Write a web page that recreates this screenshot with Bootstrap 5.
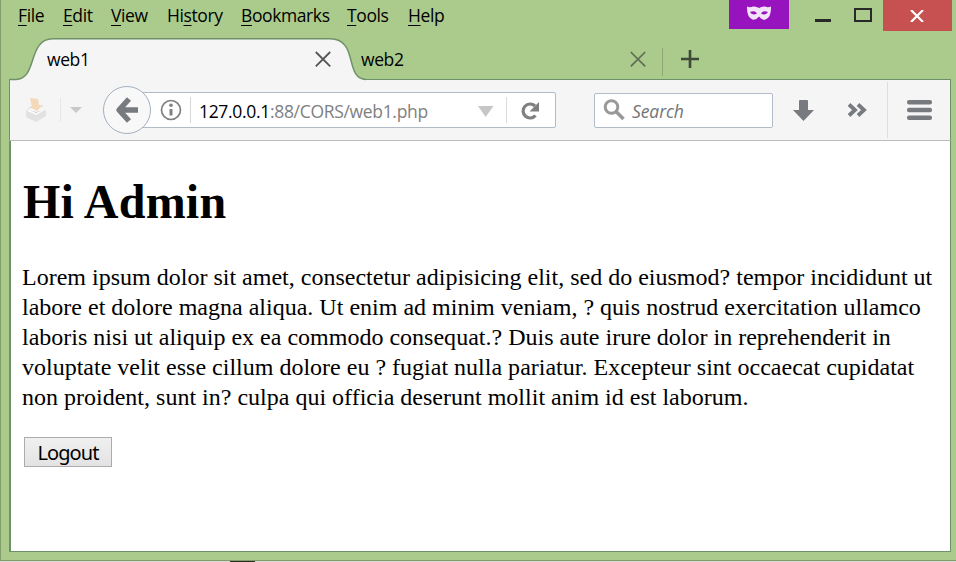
<!DOCTYPE html>
<html lang="en">
<head>
<meta charset="utf-8">
<meta name="viewport" content="width=device-width, initial-scale=1">
<title>web1</title>
<link href="https://cdn.jsdelivr.net/npm/bootstrap@5.3.0/dist/css/bootstrap.min.css" rel="stylesheet">
<style>
body{width:956px;height:562px;overflow:hidden;background:#d9d9d9;font-family:"Open Sans","Noto Sans",sans-serif;font-size:17.5px;line-height:24px;color:#000}
svg{display:block;flex:none}
.win{height:561px;background:#abcb8c;border-left:1px solid #819c69;border-bottom:1px solid #819c69;padding:0 5px 8px 8px}
.titlebar{height:38px}
.menus{display:grid;grid-template-columns:27px 30px 38px 56px 88px 43px 37px;column-gap:18px;padding:3px 0 0 9px;letter-spacing:-.4px}
.menus span{white-space:nowrap}
.menus u{text-underline-offset:3px;text-decoration-thickness:1px}
.mask{width:60px;height:29px;background:#9613be}
.closebtn{width:69px;height:31px;background:#c75050;margin-right:-1px;padding-right:2px}
.tabs{height:41px;letter-spacing:-.4px}
.tab1{width:363px;height:43px;padding:9px 0 0 38px}
.tab2{padding-top:9px;margin-left:-11px}
.tab2 span{width:269px}
.tab2 svg{margin-top:1px}
.tabclose{margin:1px 41px 0 auto}
.tabshape{left:0;top:0;z-index:0}
.chrome{height:62px;background:#f5f5f5;border:1px solid #6f9169;border-bottom:1px solid #bcbcbc}
.page{background:#fff;border:1px solid #6f9169;border-left-width:2px;border-top:0;padding:31px 11px 0 11px;font-family:"Liberation Serif","Times New Roman",serif;color:#000}
.back{width:48px;height:48px;border:1px solid #a3b0bf;background:#f8f8f8;z-index:2}
.url{width:424px;height:36px;margin-left:-19px;border:1px solid #b1bcc8;background:#fff;border-radius:2px}
.addr{color:#7f7f7f;white-space:nowrap;padding:2px 0 0 3px;letter-spacing:-.32px}
.addr b{font-weight:400;color:#000}
.search{width:179px;height:35px;border:1px solid #b1bcc8;background:#fff;border-radius:2px;margin-left:38px}
.hint{font-style:italic;color:#747474;padding-top:2px;letter-spacing:-.1px}
.page h1{font-size:48px;line-height:60px;font-weight:700;margin:0 0 30px 1px;letter-spacing:.25px}
.page p{font-size:24px;line-height:30px;margin:0 0 25px;white-space:nowrap;letter-spacing:.005px}
.logout{width:88px;height:30px;margin-left:2px;border:1px solid #acacac;background:linear-gradient(#f0f0f0,#e3e3e3);font:20px/28px "Noto Sans",sans-serif;letter-spacing:-.95px;color:#000;padding:1px 0 0}
.scrap{left:230px;top:561px;width:25px;height:1px;background:#2b3026}
</style>
<script src="https://cdn.jsdelivr.net/npm/bootstrap@5.3.0/dist/js/bootstrap.bundle.min.js"></script>
</head>
<body>
<div class="win d-flex flex-column">
  <div class="titlebar d-flex align-items-start flex-shrink-0">
    <nav class="menus">
      <span><u>F</u>ile</span><span><u>E</u>dit</span><span><u>V</u>iew</span><span>Hi<u>s</u>tory</span><span><u>B</u>ookmarks</span><span><u>T</u>ools</span><span><u>H</u>elp</span>
    </nav>
    <div class="mask ms-auto d-flex justify-content-center"><svg width="26" height="29" viewBox="0 0 26 29"><path fill="#f3e3f8" fill-rule="evenodd" d="M1 6.500Q4 8 7 6.500Q10 6 13 8Q16 6 19 6.500Q22 8 25 6.500Q25.500 18 19 19.700Q15.500 20 13 16.500Q10.500 20 7 19.700Q.5 18 1 6.500ZM4 12Q6 16 11 13.500Q9 10 4 12ZM22 12Q20 16 15 13.500Q17 10 22 12Z"/></svg></div>
    <svg width="94" height="31" viewBox="0 0 94 31"><path fill="#292929" d="M26 19h16v3H26z"/><path fill="none" stroke="#292929" stroke-width="2" d="M66 9h16v12H66z"/></svg>
    <div class="closebtn d-flex align-items-center justify-content-center"><svg width="14" height="12" viewBox="0 0 14 12"><path stroke="#fff" stroke-width="2.200" d="M1 0l12 12M13 0L1 12"/></svg></div>
  </div>
  <div class="tabs d-flex flex-shrink-0">
    <div class="tab1 position-relative d-flex align-items-start flex-shrink-0">
      <svg class="tabshape position-absolute" width="363" height="43" viewBox="0 0 363 43"><path fill="#f5f5f5" d="M1 43V41.500H7C29 41 18 .8 44 .8H321C350 .8 335 41 357 41.500V43Z"/><path fill="none" stroke="#6f9169" stroke-width="1.500" d="M0 41.500H7C29 41 18 .8 44 .8H321C350 .8 335 41 357 41.500"/></svg>
      <span class="position-relative">web1</span>
      <svg class="tabclose position-relative" width="16" height="23" viewBox="0 0 16 23"><path stroke="#555" stroke-width="1.800" d="M.8 4l14.400 14.400M15.200 4L.8 18.400"/></svg>
    </div>
    <div class="tab2 d-flex align-items-start">
      <span>web2</span>
      <svg width="84" height="28" viewBox="0 0 84 28"><path stroke="#606d54" stroke-width="1.700" d="M.8 4l14.400 14.400M15.200 4L.8 18.400"/><path stroke="#8da873" d="M32.500 0v28"/><path stroke="#3e4836" stroke-width="2.600" d="M51 11h18M60 2v18"/></svg>
    </div>
  </div>
  <div class="chrome d-flex align-items-center flex-shrink-0">
    <svg width="93" height="58" viewBox="0 0 93 58"><path fill="#e2e2e2" d="M16 30l5-5h10l5 5v5l-10 6-10-5z"/><path fill="#fafafa" d="M17 30l5-4h9l4 3-9 5z"/><path fill="#c9c9c9" d="M20 29l6 3 6-3-6 2z"/><path fill="#f4d8ba" d="M20 17l8 1 1 6h4l-6 6-8-4h3z"/><path stroke="#e7e7e7" d="M50.500 17v24"/><path fill="#c9c9c9" d="M60 26h12l-6 6z"/></svg>
    <div class="back rounded-circle d-flex align-items-center justify-content-center flex-shrink-0"><svg width="24" height="26" viewBox="0 0 24 26"><path fill="none" stroke="#777a7e" stroke-width="5.500" stroke-linejoin="round" d="M14 2L4 13l10 11M4 13h19"/></svg></div>
    <div class="url d-flex align-items-center flex-shrink-0">
      <svg width="63" height="34" viewBox="0 0 63 34"><circle cx="38" cy="17" r="9.500" fill="none" stroke="#808080" stroke-width="1.700"/><circle cx="38" cy="12.300" r="1.800" fill="#808080"/><path stroke="#808080" stroke-width="3" d="M38 16v6.500"/><path stroke="#d7d7d7" d="M57.500 4v26"/></svg>
      <span class="addr"><b>127.0.0.1</b>:88/CORS/web1.php</span>
      <svg class="ms-auto" width="77" height="34" viewBox="0 0 77 34"><path fill="#c6c6c6" d="M0 13h15.500L7.700 24z"/><path stroke="#dcdcdc" d="M28.500 4v26"/><path fill="none" stroke="#808080" stroke-width="3.200" d="M57.500 22.500A7 7 0 1 1 57 13"/><path fill="#808080" d="M61 9v9.500h-9.500z"/></svg>
    </div>
    <div class="search d-flex align-items-center flex-shrink-0">
      <svg width="37" height="33" viewBox="0 0 37 33"><circle cx="16.500" cy="13" r="6.300" fill="none" stroke="#999" stroke-width="3"/><path stroke="#999" stroke-width="3.500" d="M21 17.500l7.500 7.500"/></svg>
      <span class="hint">Search</span>
    </div>
    <svg width="168" height="58" viewBox="0 0 168 58"><g fill="#777a7e"><path d="M26 20q0-1 1-1h7q1 0 1 1v9h6L30.500 40 20 29h6z"/><rect x="134" y="19" width="25" height="4.500" rx="2"/><rect x="134" y="26.800" width="25" height="4.500" rx="2"/><rect x="134" y="34.500" width="25" height="4.500" rx="2"/></g><path fill="none" stroke="#777a7e" stroke-width="3.800" d="M76 23.500l6 5.500-6 5.500M85 23.500l6 5.500-6 5.500"/><path stroke="#dedede" d="M114.500 1v56"/></svg>
  </div>
  <main class="page flex-grow-1">
    <h1>Hi Admin</h1>
    <p>Lorem ipsum dolor sit amet, consectetur adipisicing elit, sed do eiusmod? tempor incididunt ut<br>labore et dolore magna aliqua. Ut enim ad minim veniam, ? quis nostrud exercitation ullamco<br>laboris nisi ut aliquip ex ea commodo consequat.? Duis aute irure dolor in reprehenderit in<br>voluptate velit esse cillum dolore eu ? fugiat nulla pariatur. Excepteur sint occaecat cupidatat<br>non proident, sunt in? culpa qui officia deserunt mollit anim id est laborum.</p>
    <button class="logout" type="button">Logout</button>
  </main>
</div>
<div class="scrap position-absolute"></div>
</body>
</html>
